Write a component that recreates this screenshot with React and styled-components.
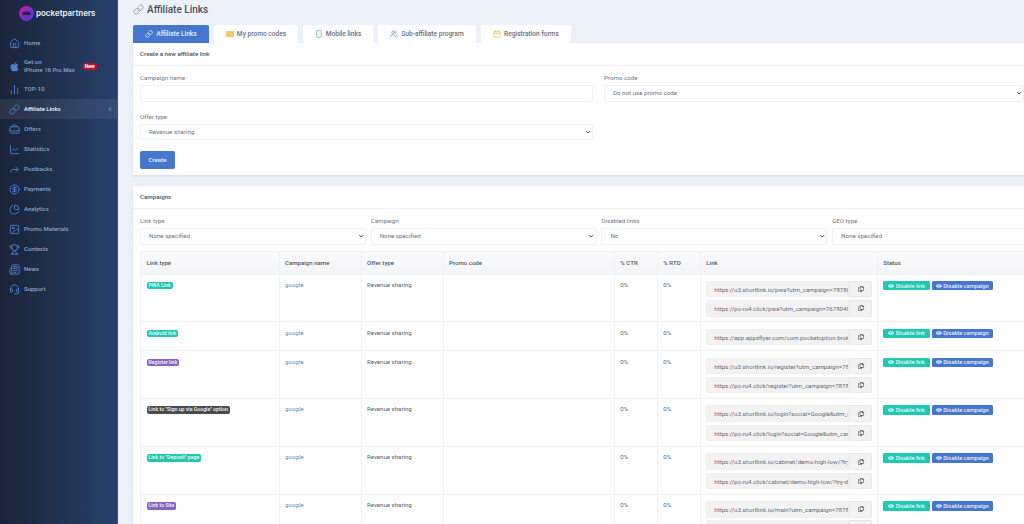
import React from 'react'
import styled, { createGlobalStyle } from 'styled-components'
import {
  Home,
  ChartNoAxesColumn,
  Link as LinkIcon,
  BriefcaseBusiness,
  ChartLine,
  Forward,
  CircleDollarSign,
  ChartPie,
  Image,
  Trophy,
  Newspaper,
  Headset,
  ChevronDown,
  ChevronLeft,
  Users,
  Calendar,
  Smartphone,
} from 'lucide-react'
import { FaApple, FaEye, FaRegCopy } from 'react-icons/fa'

const GlobalStyle = createGlobalStyle`
  html, body {
    margin: 0;
    height: 100%;
    overflow: hidden;
    font-family: Roboto, "Liberation Sans", sans-serif;
    background: #edf1f9;
  }
  * { box-sizing: border-box; }
`
const Page = styled.div`
  display: flex;
  width: 1024px;
  height: 524px;
  overflow: hidden;
`
const Sidebar = styled.aside`
  width: 118px;
  flex-shrink: 0;
  background: linear-gradient(90deg, #1a2338 0%, #27406a 100%);
  border-right: 1px solid #3a5688;
  display: flex;
  flex-direction: column;
`
const Logo = styled.div`
  height: 33px;
  display: flex;
  align-items: center;
  padding: 0 0 7px 19px;
  gap: 2px;
  color: #f1f3f8;
  font-family: Inter, sans-serif;
  font-size: 8px;
  font-weight: 600;
`
const NavList = styled.nav`
  display: flex;
  flex-direction: column;
`
const NavItem = styled.div`
  height: ${(p) => (p.$tall ? '26px' : '20px')};
  display: flex;
  align-items: center;
  gap: 4px;
  padding-left: 9px;
  position: relative;
  font-size: 6px;
  font-weight: 500;
  line-height: 8px;
  color: ${(p) => (p.$active ? '#eef2f8' : '#8fa4c6')};
  background: ${(p) => (p.$active ? 'rgba(255, 255, 255, 0.07)' : 'transparent')};
  svg {
    width: 11px;
    height: 11px;
    color: #4a80cf;
    flex-shrink: 0;
  }
`
const NewBadge = styled.span`
  background: #b3152a;
  color: #fff;
  font-size: 5px;
  font-weight: 700;
  line-height: 7px;
  padding: 0 2px;
  border-radius: 2px;
  margin-left: 4px;
`
const ActiveMark = styled.span`
  position: absolute;
  right: 4px;
  top: 7px;
  display: flex;
  svg {
    width: 6px;
    height: 6px;
    color: #20c9b2;
    stroke-width: 4;
  }
`
const Main = styled.main`
  flex: 1;
  min-width: 0;
  padding-left: 15px;
  overflow: hidden;
`
const PageTitle = styled.h1`
  margin: 0;
  height: 25px;
  padding: 0 0 7px;
  display: flex;
  align-items: center;
  gap: 3px;
  font-size: 10px;
  font-weight: 500;
  color: #4b4f58;
  svg {
    width: 11px;
    height: 11px;
    color: #8c96a8;
  }
`
const Tabs = styled.div`
  display: flex;
  gap: 5px;
  height: 18px;
`
const Tab = styled.div`
  width: ${(p) => p.$w}px;
  display: flex;
  align-items: center;
  justify-content: center;
  gap: 3px;
  border-radius: 2px 2px 0 0;
  font-size: 6.6px;
  font-weight: 500;
  background: ${(p) => (p.$active ? '#4677cf' : '#fff')};
  color: ${(p) => (p.$active ? '#e8eefa' : '#6c717b')};
  svg {
    width: 8px;
    height: 8px;
    color: ${(p) => p.$icon || '#fff'};
  }
`
const Card = styled.section`
  width: 1100px;
  background: #fff;
  box-shadow: 0 1px 3px rgba(120, 135, 170, 0.2);
  margin-bottom: ${(p) => p.$gap || 0}px;
`
const CardHeader = styled.div`
  height: 23px;
  display: flex;
  align-items: center;
  padding-left: 7px;
  font-size: 6.2px;
  font-weight: 500;
  color: #50545c;
  border-bottom: 1px solid #f0f1f4;
`
const FormBody = styled.div`
  padding: 8px 7px 7px;
  display: grid;
  grid-template-columns: 453px 420px;
  column-gap: 11px;
  row-gap: 11px;
  height: 109px;
  align-content: start;
`
const Field = styled.div`
  display: flex;
  flex-direction: column;
  gap: 3px;
`
const Label = styled.label`
  font-size: 6.2px;
  line-height: 8px;
  color: #747881;
`
const SelectWrap = styled.div`
  position: relative;
  height: 16.5px;
  svg {
    position: absolute;
    right: 2px;
    top: 5px;
    width: 6.5px;
    height: 6.5px;
    color: #333;
    stroke-width: 3.5;
    pointer-events: none;
  }
`
const Select = styled.select`
  display: block;
  appearance: none;
  width: 100%;
  height: 16.5px;
  padding: 0 8px;
  border: 1px solid #f0f1f4;
  border-radius: 2px;
  background: #fff;
  font-family: inherit;
  font-size: 6.2px;
  color: #70747c;
  outline: none;
`
const TextInput = styled.input`
  height: 16.5px;
  border: 1px solid #f0f1f4;
  border-radius: 2px;
  background: #fff;
  outline: none;
`
const CreateButton = styled.button`
  width: 35px;
  height: 18px;
  border: none;
  border-radius: 2px;
  background: #4677cf;
  color: #e8eefa;
  font-family: inherit;
  font-size: 6.2px;
  font-weight: 500;
`
const Filters = styled.div`
  display: grid;
  grid-template-columns: repeat(4, 226px);
  column-gap: 4.7px;
  padding: 8px 7px 6.5px;
`
const TableWrap = styled.div`
  padding: 0 7px;
`
const Table = styled.table`
  width: 100%;
  table-layout: fixed;
  border-collapse: collapse;
  font-size: 6.1px;
  color: #5a5e66;
  th, td {
    border: 1px solid #f0f1f4;
    padding: 6.4px 5.5px 0;
    text-align: left;
    vertical-align: top;
  }
  th {
    height: 22.5px;
    padding-top: 0;
    vertical-align: middle;
    font-weight: 500;
    color: #55595f;
    background: linear-gradient(180deg, #fbfbfc, #f3f4f6);
  }
`
const Col = styled.col`
  width: ${(p) => p.$w}px;
`
const Row = styled.tr`
  height: ${(p) => (p.$short ? 29 : 47.8)}px;
`
const Badge = styled.span`
  display: inline-block;
  padding: 0 2px;
  height: 7.5px;
  line-height: 7.5px;
  border-radius: 2px;
  font-size: 5.2px;
  font-weight: 500;
  color: #f2f5f9;
  background: ${(p) => p.$color};
`
const CampaignLink = styled.a`
  color: #5f89c9;
`
const LinkRow = styled.div`
  display: flex;
  width: 166px;
  height: 16.5px;
  margin-bottom: 2.8px;
`
const LinkText = styled.div`
  flex: 1;
  min-width: 0;
  overflow: hidden;
  white-space: nowrap;
  padding: 0 7px;
  line-height: 16.5px;
  background: #f2f2f3;
  border: 1px solid #eeeeef;
  border-radius: 2px 0 0 2px;
  color: #696d74;
`
const CopyButton = styled.div`
  width: 23px;
  display: flex;
  align-items: center;
  justify-content: center;
  background: #f2f2f3;
  border: 1px solid #e8e8ea;
  border-radius: 0 2px 2px 0;
  svg {
    width: 6px;
    height: 6px;
    color: #44474c;
  }
`
const StatusCell = styled.div`
  display: flex;
  gap: 2px;
`
const StatusButton = styled.div`
  width: ${(p) => p.$w}px;
  height: 9.5px;
  display: flex;
  align-items: center;
  justify-content: center;
  gap: 1.5px;
  border-radius: 1.5px;
  font-size: 5.7px;
  font-weight: 500;
  color: #e6f1f5;
  background: ${(p) => p.$color};
  svg {
    width: 6px;
    height: 6px;
  }
`

const navItems = [
  { icon: <Home />, label: 'Home' },
  { icon: <FaApple />, label: <>Get on<br />iPhone 16 Pro Max</>, tall: true, isNew: true },
  { icon: <ChartNoAxesColumn />, label: 'TOP-10' },
  { icon: <LinkIcon />, label: 'Affiliate Links', active: true },
  { icon: <BriefcaseBusiness />, label: 'Offers' },
  { icon: <ChartLine />, label: 'Statistics' },
  { icon: <Forward />, label: 'Postbacks' },
  { icon: <CircleDollarSign />, label: 'Payments' },
  { icon: <ChartPie />, label: 'Analytics' },
  { icon: <Image />, label: 'Promo Materials' },
  { icon: <Trophy />, label: 'Contests' },
  { icon: <Newspaper />, label: 'News' },
  { icon: <Headset />, label: 'Support' },
]

const rows = [
  {
    type: 'PWA Link',
    color: '#1fc9b1',
    links: ['https://u3.shortlink.io/pwa?utm_campaign=78780', 'https://po-ru4.click/pwa?utm_campaign=7678048'],
  },
  {
    type: 'Android link',
    color: '#1fc9b1',
    short: true,
    links: ['https://app.appsflyer.com/com.pocketoption.brok'],
  },
  {
    type: 'Register link',
    color: '#8a63ba',
    links: ['https://u3.shortlink.io/register?utm_campaign=78', 'https://po-ru4.click/register?utm_campaign=7878'],
  },
  {
    type: 'Link to "Sign up via Google" option',
    color: '#4b4b4d',
    links: ['https://u3.shortlink.io/login?social=Google&utm_c', 'https://po-ru4.click/login?social=Google&utm_car'],
  },
  {
    type: 'Link to "Deposit" page',
    color: '#1fc9b1',
    links: ['https://u3.shortlink.io/cabinet/demo-high-low/?try', 'https://po-ru4.click/cabinet/demo-high-low/?try-d'],
  },
  {
    type: 'Link to Site',
    color: '#8a63ba',
    links: ['https://u3.shortlink.io/main?utm_campaign=7878', 'https://po-ru4.click/main?utm_campaign=7878'],
  },
]

const filters = [
  { label: 'Link type', value: 'None specified' },
  { label: 'Campaign', value: 'None specified' },
  { label: 'Disabled links', value: 'No' },
  { label: 'GEO type', value: 'None specified' },
]

const columnWidths = [138.5, 82, 82, 171.3, 43, 43, 177, 349.2]

const FilterSelect = ({ value }) => (
  <SelectWrap>
    <Select defaultValue={value}>
      <option>{value}</option>
    </Select>
    <ChevronDown />
  </SelectWrap>
)

const App = () => {
  return (
    <>
      <GlobalStyle />
      <Page>
        <Sidebar>
          <Logo>
            <svg width="15" height="15" viewBox="0 0 15 15">
              <defs>
                <linearGradient id="logoGrad" x1="0" y1="0" x2="1" y2="1">
                  <stop offset="0" stopColor="#d312a8" />
                  <stop offset="1" stopColor="#3a3fd8" />
                </linearGradient>
              </defs>
              <circle cx="7.5" cy="7.5" r="7.5" fill="url(#logoGrad)" />
              <path d="M3.5 9V5.500l1.500 1 1-1.500 1.500 1.500L9 5l1 1.500 1.500-1V9z" fill="#1f2740" />
            </svg>
            pocketpartners
          </Logo>
          <NavList>
            {navItems.map((item, i) => (
              <NavItem key={i} $tall={item.tall} $active={item.active}>
                {item.icon}
                <span>{item.label}</span>
                {item.isNew && <NewBadge>New</NewBadge>}
                {item.active && <ActiveMark><ChevronLeft /></ActiveMark>}
              </NavItem>
            ))}
          </NavList>
        </Sidebar>
        <Main>
          <PageTitle>
            <LinkIcon />
            Affiliate Links
          </PageTitle>
          <Tabs>
            <Tab $active $w={76}><LinkIcon />Affiliate Links</Tab>
            <Tab $w={84}>
              <svg viewBox="0 0 8 8"><rect y="1" width="8" height="6" fill="#f5c96b" /></svg>
              My promo codes
            </Tab>
            <Tab $w={70} $icon="#2cc5b5"><Smartphone />Mobile links</Tab>
            <Tab $w={98} $icon="#6b93d6"><Users />Sub-affiliate program</Tab>
            <Tab $w={90} $icon="#f2b950"><Calendar />Registration forms</Tab>
          </Tabs>
          <Card $gap={11}>
            <CardHeader>Create a new affiliate link</CardHeader>
            <FormBody>
              <Field>
                <Label>Campaign name</Label>
                <TextInput />
              </Field>
              <Field>
                <Label>Promo code</Label>
                <FilterSelect value="Do not use promo code" />
              </Field>
              <Field>
                <Label>Offer type</Label>
                <FilterSelect value="Revenue sharing" />
              </Field>
              <div />
              <CreateButton>Create</CreateButton>
            </FormBody>
          </Card>
          <Card>
            <CardHeader>Campaigns</CardHeader>
            <Filters>
              {filters.map((f) => (
                <Field key={f.label}>
                  <Label>{f.label}</Label>
                  <FilterSelect value={f.value} />
                </Field>
              ))}
            </Filters>
            <TableWrap>
              <Table>
                <colgroup>
                  {columnWidths.map((w, i) => (
                    <Col key={i} $w={w} />
                  ))}
                </colgroup>
                <thead>
                  <tr>
                    <th>Link type</th>
                    <th>Campaign name</th>
                    <th>Offer type</th>
                    <th>Promo code</th>
                    <th>% CTR</th>
                    <th>% RTD</th>
                    <th>Link</th>
                    <th>Status</th>
                  </tr>
                </thead>
                <tbody>
                  {rows.map((row) => (
                    <Row key={row.type} $short={row.short}>
                      <td><Badge $color={row.color}>{row.type}</Badge></td>
                      <td><CampaignLink>google</CampaignLink></td>
                      <td>Revenue sharing</td>
                      <td />
                      <td>0%</td>
                      <td>0%</td>
                      <td>
                        {row.links.map((link) => (
                          <LinkRow key={link}>
                            <LinkText>{link}</LinkText>
                            <CopyButton><FaRegCopy /></CopyButton>
                          </LinkRow>
                        ))}
                      </td>
                      <td>
                        <StatusCell>
                          <StatusButton $w={46.5} $color="#1fc9b1"><FaEye />Disable link</StatusButton>
                          <StatusButton $w={61} $color="#4677cf"><FaEye />Disable campaign</StatusButton>
                        </StatusCell>
                      </td>
                    </Row>
                  ))}
                </tbody>
              </Table>
            </TableWrap>
          </Card>
        </Main>
      </Page>
    </>
  )
}

export default App
